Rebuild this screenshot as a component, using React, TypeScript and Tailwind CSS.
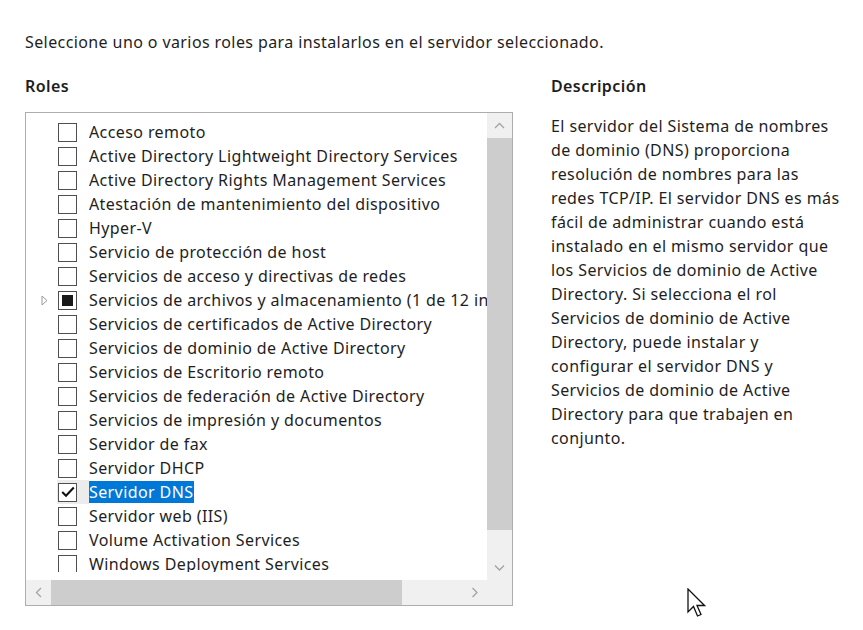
import React from "react";

interface Role {
    name: string;
    state?: "checked" | "partial";
    expandable?: boolean;
    selected?: boolean;
}

const roles: Role[] = [
    { name: "Acceso remoto" },
    { name: "Active Directory Lightweight Directory Services" },
    { name: "Active Directory Rights Management Services" },
    { name: "Atestación de mantenimiento del dispositivo" },
    { name: "Hyper-V" },
    { name: "Servicio de protección de host" },
    { name: "Servicios de acceso y directivas de redes" },
    {
        name: "Servicios de archivos y almacenamiento (1 de 12 instalados)",
        state: "partial",
        expandable: true,
    },
    { name: "Servicios de certificados de Active Directory" },
    { name: "Servicios de dominio de Active Directory" },
    { name: "Servicios de Escritorio remoto" },
    { name: "Servicios de federación de Active Directory" },
    { name: "Servicios de impresión y documentos" },
    { name: "Servidor de fax" },
    { name: "Servidor DHCP" },
    { name: "Servidor DNS", state: "checked", selected: true },
    { name: "Servidor web (IIS)" },
    { name: "Volume Activation Services" },
    { name: "Windows Deployment Services" },
    { name: "Windows Server Update Services" },
];

const description = [
    "El servidor del Sistema de nombres",
    "de dominio (DNS) proporciona",
    "resolución de nombres para las",
    "redes TCP/IP. El servidor DNS es más",
    "fácil de administrar cuando está",
    "instalado en el mismo servidor que",
    "los Servicios de dominio de Active",
    "Directory. Si selecciona el rol",
    "Servicios de dominio de Active",
    "Directory, puede instalar y",
    "configurar el servidor DNS y",
    "Servicios de dominio de Active",
    "Directory para que trabajen en",
    "conjunto.",
];

const Chevron = ({ dir }: { dir: "up" | "down" | "left" | "right" }) => {
    const paths = {
        up: "M1 6 L5.5 1.5 L10 6",
        down: "M1 1.5 L5.5 6 L10 1.5",
        left: "M6 1 L1.5 5.5 L6 10",
        right: "M1.5 1 L6 5.5 L1.5 10",
    };
    const vertical = dir === "up" || dir === "down";
    return (
        <svg
            width={vertical ? 11 : 8}
            height={vertical ? 8 : 11}
            viewBox={vertical ? "0 0 11 8" : "0 0 8 11"}
        >
            <path d={paths[dir]} fill="none" stroke="#a3a3a3" strokeWidth="1.3" />
        </svg>
    );
};

const CheckBox = ({ state }: { state?: "checked" | "partial" }) => (
    <div className="w-[19px] h-[19px] border border-[#4f4f4f] bg-white flex items-center justify-center shrink-0">
        {state === "partial" && <div className="w-[11px] h-[11px] bg-[#1a1a1a]" />}
        {state === "checked" && (
            <svg width="14" height="12" viewBox="0 0 14 12">
                <path d="M1.2 6 L5 9.8 L12.8 1.5" fill="none" stroke="#111" strokeWidth="2.1" />
            </svg>
        )}
    </div>
);

const App = () => {
    return (
        <div
            className="relative w-[863px] h-[630px] bg-white overflow-hidden pl-[25px] pt-[32px] text-[#1e1e1e] text-[16px] tracking-[0.4px]"
            style={{ fontFamily: '"Noto Sans", "Open Sans", sans-serif' }}
        >
            <div className="leading-[20px]">
                Seleccione uno o varios roles para instalarlos en el servidor seleccionado.
            </div>

            <div className="flex mt-[24px] gap-[38px]">
                {/* ===== ROLES ===== */}
                <div className="w-[488px] shrink-0">
                    <div className="leading-[20px] font-semibold">Roles</div>
                    <div className="mt-[16px] h-[494px] border border-[#adadad] flex flex-col">
                        <div className="flex flex-1 min-h-0">
                            <div className="flex-1 overflow-hidden">
                                <div className="h-[459px] overflow-hidden pt-[7px]">
                                    {roles.map((role, index) => (
                                        <div key={index} className="flex items-center h-[24px] whitespace-nowrap">
                                            <div className="w-[31px] flex justify-end pr-[9px] shrink-0">
                                                {role.expandable && (
                                                    <svg width="7" height="11" viewBox="0 0 7 11">
                                                        <path d="M1 1 L6 5.5 L1 10 Z" fill="none" stroke="#9a9a9a" strokeWidth="1" />
                                                    </svg>
                                                )}
                                            </div>
                                            <div
                                                className={`flex items-center h-[24px] pl-[1px] pr-[12px] ${
                                                    role.selected ? "bg-[#ececec]" : ""
                                                }`}
                                            >
                                                <CheckBox state={role.state} />
                                            </div>
                                            <span
                                                className={`leading-[22px] ${
                                                    role.selected ? "bg-[#0078d7] text-white pr-[1px]" : ""
                                                }`}
                                            >
                                                {role.name}
                                            </span>
                                        </div>
                                    ))}
                                </div>
                            </div>
                            {/* vertical scrollbar */}
                            <div className="w-[25px] bg-[#f0f0f0] flex flex-col shrink-0">
                                <div className="h-[25px] flex items-center justify-center">
                                    <Chevron dir="up" />
                                </div>
                                <div className="h-[392px] bg-[#cdcdcd]" />
                                <div className="flex-1" />
                                <div className="h-[25px] flex items-center justify-center">
                                    <Chevron dir="down" />
                                </div>
                            </div>
                        </div>
                        {/* horizontal scrollbar */}
                        <div className="h-[25px] bg-[#f0f0f0] flex shrink-0">
                            <div className="w-[25px] flex items-center justify-center">
                                <Chevron dir="left" />
                            </div>
                            <div className="w-[351px] bg-[#cdcdcd]" />
                            <div className="flex-1" />
                            <div className="w-[25px] flex items-center justify-center">
                                <Chevron dir="right" />
                            </div>
                            <div className="w-[25px]" />
                        </div>
                    </div>
                </div>

                {/* ===== DESCRIPTION ===== */}
                <div className="flex-1">
                    <div className="leading-[20px] font-semibold">Descripción</div>
                    <div className="mt-[18px] leading-[24px] whitespace-nowrap">
                        {description.map((line, index) => (
                            <div key={index}>{line}</div>
                        ))}
                    </div>
                </div>
            </div>

            {/* mouse cursor */}
            <svg
                className="absolute left-[687px] top-[588px]"
                width="19"
                height="30"
                viewBox="0 0 19 30"
            >
                <path
                    d="M1 1 L1 24 L6.5 18.5 L10.5 28 L14 26.5 L10 17.5 L17.5 17.5 Z"
                    fill="white"
                    stroke="#111"
                    strokeWidth="1.3"
                    strokeLinejoin="miter"
                />
            </svg>
        </div>
    );
};

export default App;
